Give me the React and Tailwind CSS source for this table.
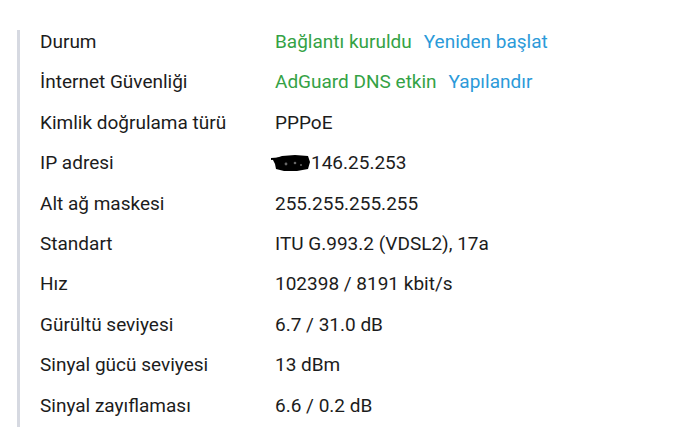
import React from "react";

const rows = [
  ["Durum", <><span className="text-[#34a245]">Bağlantı kuruldu</span><span className="ml-[12px] text-[#2b9ad9]">Yeniden başlat</span></>],
  ["İnternet Güvenliği", <><span className="text-[#34a245]">AdGuard DNS etkin</span><span className="ml-[12px] text-[#2b9ad9]">Yapılandır</span></>],
  ["Kimlik doğrulama türü", "PPPoE"],
  ["IP adresi", <span className="inline-flex items-center h-[24px]"><svg width="40" height="20" viewBox="0 0 40 20" className="-ml-[4px] block"><path d="M2 6 L11 3 L24 2 L37 3 L39 9 L37 16 L26 18 L13 18 L5 16 L4 11 L2 7 Z" fill="#000"/><path d="M0 6 L15 5" stroke="#000" strokeWidth="2"/><circle cx="15" cy="11" r="1.4" fill="#666"/><circle cx="24" cy="10" r="1.3" fill="#666"/><circle cx="30" cy="12" r="1" fill="#666"/></svg><span>146.25.253</span></span>],
  ["Alt ağ maskesi", "255.255.255.255"],
  ["Standart", "ITU G.993.2 (VDSL2), 17a"],
  ["Hız", "102398 / 8191 kbit/s"],
  ["Gürültü seviyesi", "6.7 / 31.0 dB"],
  ["Sinyal gücü seviyesi", "13 dBm"],
  ["Sinyal zayıflaması", "6.6 / 0.2 dB"],
];

export default function App() {
  return (
    <div className="w-[691px] h-[427px] bg-white overflow-hidden pt-[30px] pl-[17px]" style={{ fontFamily: "Roboto, sans-serif" }}>
      <div className="border-l-[3px] border-[#d6d9e1] pl-[20px] h-[420px] flex flex-col gap-[16.4px] text-[19px] leading-[24px] text-[#1c1c1c]">
        {rows.map(([k, v], i) => (
          <div key={i} className="flex h-[24px]">
            <div className="w-[235px] shrink-0">{k}</div>
            <div>{v}</div>
          </div>
        ))}
      </div>
    </div>
  );
}
